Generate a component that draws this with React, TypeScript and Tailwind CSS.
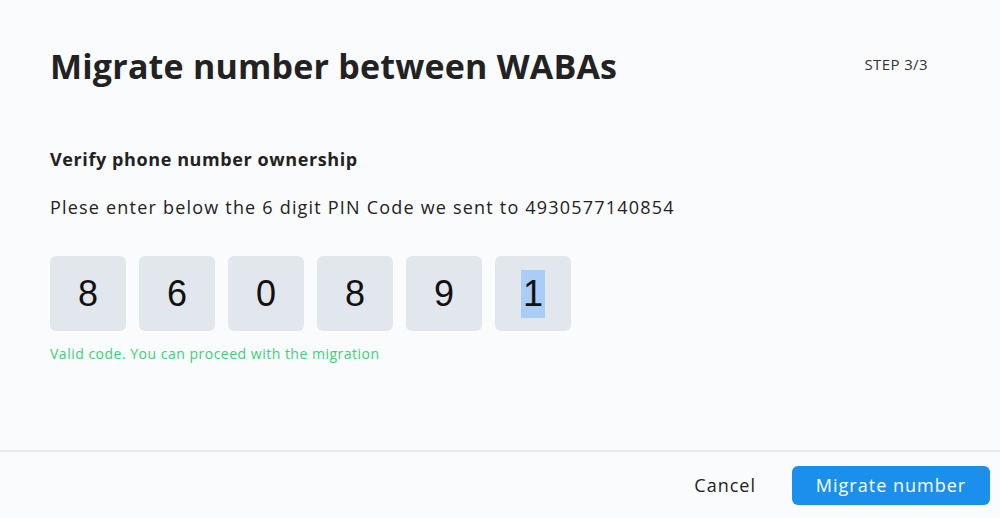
const digits = ["8", "6", "0", "8", "9", "1"];

const App = () => {
  return (
    <div className="w-[1000px] h-[518px] bg-[#fafbfd] flex flex-col font-['Open_Sans',sans-serif] text-[#222]">
      {/* header */}
      <div className="flex justify-between items-start pl-[50px] pr-[72px] pt-[42px]">
        <h1 className="text-[34px] font-bold tracking-[0.2px] leading-[48px]">Migrate number between WABAs</h1>
        <span className="text-[15px] tracking-[0.4px] mt-[11px] text-[#333]">STEP 3/3</span>
      </div>

      {/* body */}
      <div className="flex-1 px-[50px] pt-[57px]">
        <h2 className="text-[18px] font-bold tracking-[0.6px] leading-[24px]">Verify phone number ownership</h2>
        <p className="text-[18px] tracking-[1.2px] leading-[24px] mt-[24px]">Plese enter below the 6 digit PIN Code we sent to 4930577140854</p>
        <div className="flex gap-[13px] mt-[37px]">
          {digits.map((d, i) => (
            <div
              key={i}
              className="w-[76px] h-[75px] rounded-[6px] bg-[#e2e6ed] flex items-center justify-center text-[36px] text-[#111] font-['Liberation_Sans',sans-serif]"
            >
              {i === digits.length - 1 ? (
                <span className="bg-[#a9cdf6] px-[2px] leading-[48px]">{d}</span>
              ) : (
                d
              )}
            </div>
          ))}
        </div>
        <p className="text-[14px] tracking-[0.5px] text-[#3ccf78] mt-[12px]">Valid code. You can proceed with the migration</p>
      </div>

      {/* footer */}
      <div className="border-t-2 border-[#e6e8ec] h-[68px] flex items-center justify-end pr-[10px] gap-[36px]">
        <button className="text-[18px] tracking-[1px] text-[#222]">Cancel</button>
        <button className="w-[198px] h-[39px] rounded-[6px] bg-[#1a90ec] text-white text-[18px] tracking-[1px]">
          Migrate number
        </button>
      </div>
    </div>
  );
};

export default App;
